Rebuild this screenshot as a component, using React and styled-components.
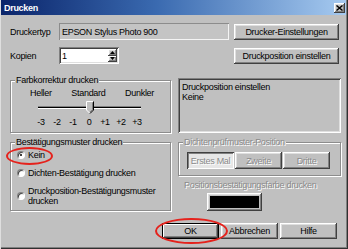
import React from 'react';
import styled, { createGlobalStyle, css } from 'styled-components';

const Global = createGlobalStyle`
  html, body { margin: 0; padding: 0; background: #c0c0c0; }
  body { font-family: "Liberation Sans", Arial, sans-serif; }
  * { box-sizing: border-box; }
`;

const textBase = css`
  font-family: "Liberation Sans", Arial, sans-serif;
  font-size: 9px;
  letter-spacing: -0.3px;
  line-height: 10px;
  color: #000;
`;

const disabledText = css`
  color: #8a8a8a;
  text-shadow: 1px 1px 0 #fff;
`;

const raised = css`
  background: #c0c0c0;
  box-shadow: inset -1px -1px #404040, inset 1px 1px #fff, inset -2px -2px #808080, inset 2px 2px #dfdfdf;
`;

const sunken = css`
  box-shadow: inset 1px 1px #808080, inset -1px -1px #fff, inset 2px 2px #404040, inset -2px -2px #dfdfdf;
`;

const Window = styled.div`
  position: relative;
  width: 348px;
  height: 249px;
  background: #c0c0c0;
  padding: 0 2px 3px 1px;
  box-shadow: inset 1px 0 #dfdfdf, inset -1px -1px #303030, inset -2px -2px #808080;
  display: flex;
  flex-direction: column;
  ${textBase}
`;

const TitleBar = styled.div`
  height: 15px;
  flex: none;
  background: linear-gradient(to right, #0a246a 0%, #3a6ab0 45%, #a6caf0 100%);
  display: flex;
  align-items: center;
  justify-content: space-between;
  padding: 0 1px 0 3px;
`;

const Title = styled.span`
  font-family: "Liberation Sans", Arial, sans-serif;
  font-weight: bold;
  font-size: 9px;
  letter-spacing: -0.3px;
  color: #fff;
`;

const CloseBtn = styled.div`
  width: 11px;
  height: 10px;
  ${raised}
  display: flex;
  align-items: center;
  justify-content: center;
`;

const Body = styled.div`
  flex: 1;
  padding: 8px 7px 0 9px;
  display: flex;
  flex-direction: column;
`;

const TopGrid = styled.div`
  display: grid;
  grid-template-columns: 49px 170px 1fr;
  grid-template-rows: 17px 17px;
  row-gap: 7px;
  align-items: center;
`;

const Label = styled.span`
  ${textBase}
`;

const ReadOnlyField = styled.div`
  height: 17px;
  padding: 0 3px;
  display: flex;
  align-items: center;
  background: #c4c4c4;
  box-shadow: inset 1px 1px #8c8c8c, inset -1px -1px #f4f4f4;
`;

const SpinField = styled.div`
  width: 60px;
  height: 17px;
  background: #fff;
  ${sunken}
  display: flex;
  align-items: stretch;
  padding: 2px;
`;

const SpinValue = styled.span`
  flex: 1;
  padding-left: 1px;
  display: flex;
  align-items: center;
`;

const SpinButtons = styled.div`
  width: 9px;
  display: flex;
  flex-direction: column;
`;

const SpinBtn = styled.div`
  flex: 1;
  ${raised}
  display: flex;
  align-items: center;
  justify-content: center;
`;

const Button = styled.div`
  width: ${(p) => p.$w}px;
  height: 16px;
  ${raised}
  display: flex;
  align-items: center;
  justify-content: center;
  white-space: nowrap;
  justify-self: end;
  ${(p) =>
    p.$default &&
    css`
      box-shadow: inset 0 0 0 1px #000, inset -2px -2px #404040, inset 2px 2px #fff, inset -3px -3px #808080;
    `}
`;

const Columns = styled.div`
  display: grid;
  grid-template-columns: 161px 163px;
  column-gap: 7px;
  margin-top: 11px;
`;

const Column = styled.div`
  display: flex;
  flex-direction: column;
  align-items: stretch;
`;

const Group = styled.div`
  height: ${(p) => p.$h}px;
  margin-top: ${(p) => p.$mt}px;
  border: 1px solid #8c8c8c;
  box-shadow: inset 1px 1px 0 #fff, 1px 1px 0 #fff;
  display: flex;
  flex-direction: column;
  align-items: flex-start;
`;

const Legend = styled.span`
  margin: -6px 0 0 4px;
  padding: 0 1px;
  background: #c0c0c0;
  white-space: nowrap;
  ${(p) => p.$disabled && disabledText}
`;

const SliderBlock = styled.div`
  margin: 3px 0 0 19px;
  width: 124px;
  display: flex;
  flex-direction: column;
`;

const SliderLabels = styled.div`
  display: flex;
  justify-content: space-between;
`;

const Track = styled.div`
  position: relative;
  margin: 3px 0 0 8px;
  width: 103px;
  height: 13px;
`;

const Channel = styled.div`
  margin-top: 5px;
  height: 3px;
  background: #000;
  border-top: 1px solid #808080;
  border-bottom: 1px solid #fff;
`;

const ThumbWrap = styled.div`
  position: absolute;
  top: 0;
  width: 8px;
  height: 13px;
`;

const Ticks = styled.div`
  margin: 3px 0 0 3px;
  display: flex;
`;

const Tick = styled.span`
  width: 16px;
  text-align: center;
`;

const RadioList = styled.div`
  margin: 3px 0 0 6px;
  display: flex;
  flex-direction: column;
  gap: 8px;
`;

const RadioRow = styled.div`
  display: flex;
  align-items: center;
  gap: 3px;
`;

const RadioText = styled.span`
  max-width: 132px;
`;

const RadioCircle = styled.span`
  flex: none;
  width: 8px;
  height: 8px;
  border-radius: 50%;
  background: #fff;
  border: 1px solid;
  border-color: #808080 #fff #fff #808080;
  box-shadow: inset 1px 1px #404040;
  display: flex;
  align-items: center;
  justify-content: center;
  &::after {
    content: '';
    width: 2px;
    height: 2px;
    border-radius: 50%;
    background: ${(p) => (p.$checked ? '#000' : 'transparent')};
  }
`;

const InfoBox = styled.div`
  margin-top: 3px;
  height: 55px;
  padding: 4px 4px;
  ${sunken}
`;

const ToggleRow = styled.div`
  margin: 5px 0 0 8px;
  display: flex;
  gap: 1px;
`;

const Toggle = styled.div`
  width: 47px;
  height: 17px;
  display: flex;
  align-items: center;
  justify-content: center;
  ${disabledText}
  ${(p) =>
    p.$pressed
      ? css`
          background: #e6e6e6;
          box-shadow: inset 1px 1px #404040, inset -1px -1px #fff, inset 2px 2px #808080;
        `
      : raised}
`;

const DisabledLabel = styled.span`
  margin: 4px 0 0 6px;
  ${disabledText}
`;

const Swatch = styled.div`
  margin: 3px 0 0 29px;
  width: 55px;
  height: 18px;
  padding: 3px;
  ${raised}
  &::before {
    content: '';
    display: block;
    height: 100%;
    background: #000;
  }
`;

const Footer = styled.div`
  margin: 12px 2px 0 0;
  display: flex;
  justify-content: flex-end;
  gap: 2px;
`;

const Ellipse = styled.div`
  position: absolute;
  border: 2px solid #e5221c;
  border-radius: 50%;
  pointer-events: none;
`;

function Thumb({ value }) {
  const left = ((value + 3) / 6) * (103 - 8);
  return (
    <ThumbWrap style={{ left }}>
      <svg width="8" height="13" viewBox="0 0 8 13">
        <path d="M0.5 0.5 H7.5 V9 L4 12.5 L0.5 9 Z" fill="#c0c0c0" />
        <path d="M0.5 9 V0.5 H7" fill="none" stroke="#fff" strokeWidth="1" />
        <path d="M7.5 0.5 V9 L4 12.5" fill="none" stroke="#000" strokeWidth="1" />
        <path d="M6.5 1.5 V8.6 L4 11" fill="none" stroke="#808080" strokeWidth="1" />
        <path d="M0.5 9 L3.5 12" fill="none" stroke="#fff" strokeWidth="1" />
      </svg>
    </ThumbWrap>
  );
}

function Arrow({ up }) {
  return (
    <svg width="5" height="3" viewBox="0 0 5 3">
      <path d={up ? 'M2.5 0 L5 3 H0 Z' : 'M0 0 H5 L2.5 3 Z'} fill="#000" />
    </svg>
  );
}

export default function App() {
  return (
    <>
      <Global />
      <Window>
        <TitleBar>
          <Title>Drucken</Title>
          <CloseBtn>
            <svg width="7" height="6" viewBox="0 0 7 6">
              <path d="M0.5 0.5 L6.5 5.5 M6.5 0.5 L0.5 5.5" stroke="#000" strokeWidth="1.4" />
            </svg>
          </CloseBtn>
        </TitleBar>
        <Body>
          <TopGrid>
            <Label>Druckertyp</Label>
            <ReadOnlyField>EPSON Stylus Photo 900</ReadOnlyField>
            <Button $w={105}>Drucker-Einstellungen</Button>
            <Label>Kopien</Label>
            <SpinField>
              <SpinValue>1</SpinValue>
              <SpinButtons>
                <SpinBtn>
                  <Arrow up />
                </SpinBtn>
                <SpinBtn>
                  <Arrow />
                </SpinBtn>
              </SpinButtons>
            </SpinField>
            <Button $w={105}>Druckposition einstellen</Button>
          </TopGrid>
          <Columns>
            <Column>
              <Group $h={53} $mt={5}>
                <Legend>Farbkorrektur drucken</Legend>
                <SliderBlock>
                  <SliderLabels>
                    <span>Heller</span>
                    <span>Standard</span>
                    <span>Dunkler</span>
                  </SliderLabels>
                  <Track>
                    <Channel />
                    <Thumb value={0} />
                  </Track>
                  <Ticks>
                    {['-3', '-2', '-1', '0', '+1', '+2', '+3'].map((t) => (
                      <Tick key={t}>{t}</Tick>
                    ))}
                  </Ticks>
                </SliderBlock>
              </Group>
              <Group $h={69} $mt={9}>
                <Legend>Bestätigungsmuster drucken</Legend>
                <RadioList>
                  <RadioRow>
                    <RadioCircle $checked />
                    <RadioText>Kein</RadioText>
                  </RadioRow>
                  <RadioRow>
                    <RadioCircle />
                    <RadioText>Dichten-Bestätigung drucken</RadioText>
                  </RadioRow>
                  <RadioRow>
                    <RadioCircle />
                    <RadioText>Druckposition-Bestätigungsmuster drucken</RadioText>
                  </RadioRow>
                </RadioList>
              </Group>
            </Column>
            <Column>
              <InfoBox>
                Druckposition einstellen
                <br />
                Keine
              </InfoBox>
              <Group $h={34} $mt={9}>
                <Legend $disabled>Dichtenprüfmuster-Position</Legend>
                <ToggleRow>
                  <Toggle $pressed>Erstes Mal</Toggle>
                  <Toggle>Zweite</Toggle>
                  <Toggle>Dritte</Toggle>
                </ToggleRow>
              </Group>
              <DisabledLabel>Positionsbestätigungsfarbe drucken</DisabledLabel>
              <Swatch />
            </Column>
          </Columns>
          <Footer>
            <Button $w={57} $default>
              OK
            </Button>
            <Button $w={57}>Abbrechen</Button>
            <Button $w={57}>Hilfe</Button>
          </Footer>
        </Body>
        <Ellipse style={{ left: 6, top: 147, width: 47, height: 18 }} />
        <Ellipse style={{ left: 155, top: 218, width: 73, height: 26 }} />
      </Window>
    </>
  );
}
